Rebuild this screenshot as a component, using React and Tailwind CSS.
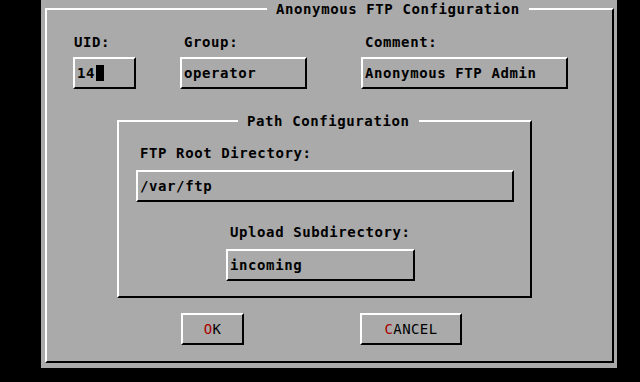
import React from "react";

function Box({ className, children }) {
  return (
    <div
      className={`flex h-[32px] items-center border-2 border-t-white border-l-white border-r-black border-b-black pl-[2px] ${className}`}
    >
      {children}
    </div>
  );
}

function Label({ className, children }) {
  return <div className={`h-[16px] ${className}`}>{children}</div>;
}

export default function App() {
  return (
    <div className="h-[382px] w-[640px] overflow-hidden bg-black font-['DejaVu_Sans_Mono',monospace] text-[14px] font-bold leading-[16px] tracking-[0.6px] text-black">
      <div className="ml-[41px] h-[368px] w-[576px] bg-[#aaaaaa] pl-[4px]">
        <fieldset className="h-[363px] w-[569px] border-2 border-t-white border-l-white border-r-black border-b-black p-0">
          <legend className="ml-[220px] px-[9px] leading-[18px]">Anonymous FTP Configuration</legend>

          {/* Row 1: UID / Group / Comment */}
          <div className="ml-[26px] mt-[16px] flex">
            <div className="flex w-[63px] flex-col">
              <Label className="ml-[1px]">UID:</Label>
              <Box className="mt-[7px] w-[63px]">
                <span>14</span>
                <span className="ml-[1px] inline-block h-[16px] w-[8px] bg-black" />
              </Box>
            </div>
            <div className="ml-[44px] flex w-[127px] flex-col">
              <Label className="ml-[4px]">Group:</Label>
              <Box className="mt-[7px] w-[127px]">
                <span>operator</span>
              </Box>
            </div>
            <div className="ml-[54px] flex w-[207px] flex-col">
              <Label className="ml-[4px]">Comment:</Label>
              <Box className="mt-[7px] w-[207px]">
                <span>Anonymous FTP Admin</span>
              </Box>
            </div>
          </div>

          {/* Path Configuration */}
          <fieldset className="ml-[70px] mt-[23px] h-[186px] w-[415px] border-2 border-t-white border-l-white border-r-black border-b-black p-0">
            <legend className="ml-[119px] px-[9px] leading-[18px]">Path Configuration</legend>
            <Label className="ml-[21px] mt-[15px]">FTP Root Directory:</Label>
            <Box className="ml-[17px] mt-[9px] w-[378px]">
              <span>/var/ftp</span>
            </Box>
            <Label className="ml-[111px] mt-[22px]">Upload Subdirectory:</Label>
            <Box className="ml-[107px] mt-[9px] w-[189px]">
              <span>incoming</span>
            </Box>
          </fieldset>

          {/* Buttons */}
          <div className="ml-[134px] mt-[15px] flex font-normal text-[14px] tracking-[0.4px]">
            <div className="flex h-[32px] w-[63px] items-center justify-center border-2 border-t-white border-l-white border-r-black border-b-black">
              <span>
                <span className="text-[#aa0000]">O</span>K
              </span>
            </div>
            <div className="ml-[116px] flex h-[32px] w-[102px] items-center justify-center border-2 border-t-white border-l-white border-r-black border-b-black">
              <span>
                <span className="text-[#aa0000]">C</span>ANCEL
              </span>
            </div>
          </div>
        </fieldset>
      </div>
    </div>
  );
}
